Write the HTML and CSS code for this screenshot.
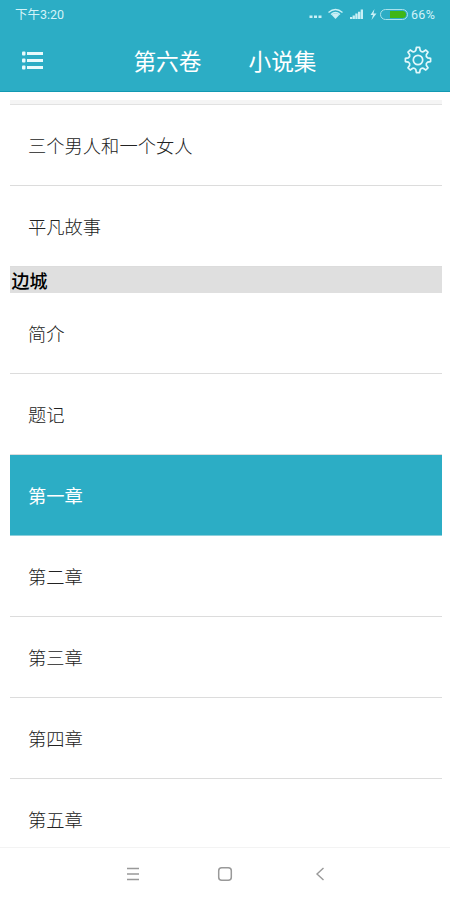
FILE: index.html
```
<!DOCTYPE html>
<html lang="zh-CN">
<head>
  <meta charset="utf-8">
  <title>第六卷 小说集</title>
  <link rel="stylesheet" href="styles.css">
</head>
<body>
  <header>
    <div class="status">
      <span class="time">下午3:20</span>
      <svg class="status-icons" width="100" height="16" viewBox="0 0 100 16">
        <g fill="#c9f0f6">
          <rect x="1.500" y="9.500" width="3" height="2.500"/>
          <rect x="6" y="9.500" width="3" height="2.500"/>
          <rect x="10.500" y="9.500" width="3" height="2.500"/>
          <path d="M27.500 13L23.500 8.800Q27.500 5.800 31.500 8.800Z"/>
          <path d="M42 13v-2h2.200V13zM44.600 13V9.500h2.300V13zM47.300 13V7.500h2.300V13zM50 13V5.700h2.300V13zM52.700 13V3.500H55V13z"/>
          <path d="M66.500 3L62.500 9H65l-1.500 5 5-6.500h-3z"/>
        </g>
        <path d="M20.500 6.500Q27.500 0.500 34.500 6.500M23 8.500Q27.500 4.500 32 8.500" fill="none" stroke="#c9f0f6" stroke-width="1.400"/>
        <rect x="72.500" y="3.500" width="27" height="10" rx="5" fill="none" stroke="#a9e2ec"/>
        <path d="M82 5h12.500a3.500 3.500 0 0 1 0 7H82z" fill="#3fb618"/>
      </svg>
      <span class="percent">66%</span>
    </div>
    <div class="toolbar">
      <svg width="22" height="20" viewBox="0 0 22 20" fill="#e9fafc">
        <rect x="0" y="0.500" width="3.500" height="4" rx="1"/>
        <rect x="0" y="7.500" width="3.500" height="4" rx="1"/>
        <rect x="0" y="14.500" width="3.500" height="4" rx="1"/>
        <rect x="5" y="1" width="16" height="3"/>
        <rect x="5" y="8" width="16" height="3"/>
        <rect x="5" y="15" width="16" height="3"/>
      </svg>
      <h1><span>第六卷</span><span>小说集</span></h1>
      <svg class="gear" width="28" height="28" viewBox="-14 -14 28 28" fill="none" stroke="#e2f8fb" stroke-width="1.700" stroke-linejoin="round">
        <path d="M-2.200-9.600L-1.600-12.600H1.600L2.200-9.600Q3.600-7.800 5.200-8.300L7.800-10L10-7.800L8.300-5.200Q7.800-3.600 9.600-2.200L12.600-1.600V1.600L9.600 2.200Q7.800 3.600 8.300 5.200L10 7.800L7.800 10L5.200 8.300Q3.600 7.800 2.200 9.600L1.600 12.600H-1.600L-2.200 9.600Q-3.600 7.800-5.200 8.300L-7.800 10L-10 7.800L-8.300 5.200Q-7.800 3.600-9.600 2.200L-12.600 1.600V-1.600L-9.600-2.200Q-7.800-3.600-8.300-5.200L-10-7.800L-7.800-10L-5.200-8.300Q-3.600-7.800-2.200-9.600Z"/>
        <circle r="4.700"/>
      </svg>
    </div>
  </header>

  <main>
    <div class="previous"></div>
    <ul>
      <li>三个男人和一个女人</li>
      <li>平凡故事</li>
    </ul>
    <h2>边城</h2>
    <ul>
      <li>简介</li>
      <li>题记</li>
      <li class="active">第一章</li>
      <li>第二章</li>
      <li>第三章</li>
      <li>第四章</li>
      <li>第五章</li>
    </ul>
  </main>

  <footer>
    <svg width="14" height="14" viewBox="0 0 14 14" stroke="#999" stroke-width="1.500">
      <path d="M1 1.500h12M1 7h12M1 12.500h12"/>
    </svg>
    <svg class="home" width="16" height="16" viewBox="0 0 16 16" fill="none" stroke="#999" stroke-width="1.500">
      <rect x="1.700" y="1.700" width="12.600" height="12.600" rx="3"/>
    </svg>
    <svg width="14" height="14" viewBox="0 0 14 14" fill="none" stroke="#999" stroke-width="1.400">
      <path d="M10.500 1L4 7L10.500 13"/>
    </svg>
  </footer>
</body>
</html>
```
FILE: styles.css
```
* {
  box-sizing: border-box;
}

body {
  margin: 0;
  height: 900px;
  overflow: hidden;
  display: flex;
  flex-direction: column;
  background-color: #fff;
  font-family: "Noto Sans CJK SC", sans-serif;
}

svg {
  display: block;
  flex-shrink: 0;
}

header {
  height: 92px;
  flex-shrink: 0;
  background-color: #2cadc5;
  border-bottom: 1px solid #1299b2;
  color: #fff;
}

.status {
  height: 30px;
  padding: 0 12px 0 15px;
  display: flex;
  align-items: center;
  color: #d3f3f8;
  font-family: Roboto, "Noto Sans CJK SC", sans-serif;
  font-size: 12.500px;
  line-height: 16px;
}

.status-icons {
  margin-left: auto;
  margin-top: -2px;
}

.percent {
  width: 27px;
  margin-left: 3px;
  letter-spacing: 0.300px;
  white-space: nowrap;
}

.toolbar {
  height: 61px;
  padding: 0 18px 0 22px;
  display: flex;
  align-items: center;
  justify-content: space-between;
}

.toolbar h1 {
  margin: 0 -2px 0 0;
  display: flex;
  gap: 47px;
  font-size: 22.700px;
  font-weight: 400;
  line-height: 32px;
}

.gear {
  margin-bottom: 1px;
}

main {
  flex: 1;
  min-height: 0;
  overflow: hidden;
  padding: 8px 8.500px 0 9.500px;
}

/* bottom edge of the row scrolled out of view */
.previous {
  height: 5px;
  background-color: #f5f5f5;
  border-bottom: 1px solid #e2e2e2;
}

ul {
  margin: 0;
  padding: 0;
  list-style: none;
}

li {
  height: 80.900px;
  padding-left: 18.500px;
  border-bottom: 1px solid #dcdcdc;
  color: #222;
  font-size: 18.300px;
  font-weight: 300;
  line-height: 80px;
}

li.active {
  background-color: #2cadc5;
  border-color: #8ccfdb;
  color: #fff;
  font-weight: 400;
}

h2 {
  margin: 0;
  height: 26.700px;
  padding-left: 2px;
  background-color: #dfdfdf;
  color: #000;
  font-size: 18px;
  font-weight: 500;
  line-height: 26px;
}

footer {
  height: 53px;
  flex-shrink: 0;
  padding: 0 123px 0 126px;
  border-top: 1px solid #f3f3f3;
  display: flex;
  align-items: center;
  justify-content: space-between;
}

.home {
  margin-right: 3px;
}
```
